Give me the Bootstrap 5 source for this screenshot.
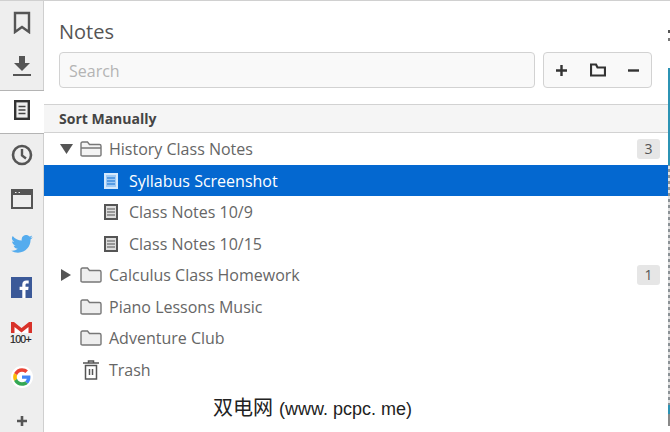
<!DOCTYPE html>
<html lang="en">
<head>
<meta charset="UTF-8">
<title>Notes</title>
<link rel="stylesheet" href="https://cdn.jsdelivr.net/npm/bootstrap@5.3.0/dist/css/bootstrap.min.css">
<style>
html, body { height: 432px; overflow: hidden; background: #fff; }
body { font-family: "Open Sans", sans-serif; color: #555; }
.app-shell { width: 670px; height: 432px; border-top: 1px solid #d0d0d0; position: relative; }
.side-rail { width: 44px; background: #eeeeee; flex: none; }
.rail-item { height: 44.3px; flex: none; border-right: 1px solid #cfcfcf; padding-bottom: 2px; }
.rail-item.is-active { background: #fff; border-top: 1px solid #b4b4b4; border-bottom: 1px solid #b4b4b4; border-right: 0; padding-bottom: 3px; }
.main-pane { flex: 1 1 0; min-width: 0; }
.edge-strip { width: 2px; flex: none; border-left: 0; background:
  linear-gradient(#fff 0 29px, #555 29px 32px, #fff 32px 37px, #777 37px 40px, #fff 40px 67px, #2c93b4 67px 164px, transparent 164px 194px, transparent 194px 404px, #2c93b4 404px 413px, #888 413px 425px, #fff 425px),
  repeating-linear-gradient(#8b9296 0 3px, #e2e2e2 3px 6px); }
.pane-title { font-size: 20px; line-height: 27px; color: #555; padding: 17px 0 0 15px; }
.search-row { padding: 7px 16px 0 15px; gap: 8px; height: 43px; }
.search-box { height: 36px; font-size: 16px; background: #f9f9f9; border: 1px solid #d2d2d2; border-radius: 4px; padding: 2px 9px 0; color: #555; }
.search-box::placeholder { color: #b4b4b4; }
.tool-group { width: 109px; height: 36px; flex: none; background: #f9f9f9; border: 1px solid #d2d2d2; border-radius: 4px; padding: 0 11px; }
.sort-bar { margin-top: 16px; height: 29px; background: #f5f5f5; border-top: 1px solid #d2d2d2; border-bottom: 1px solid #d2d2d2; font-size: 14px; font-weight: 700; color: #444; padding-left: 15px; line-height: 28px; }
.tree-row { height: 31.5px; font-size: 16px; color: #666; padding: 1px 8px 0 0; white-space: nowrap; }
.tree-row.is-selected { background: #0468d0; color: #fff; }
.tw { width: 16px; margin-left: 15px; flex: none; }
.folder-ic { width: 22px; margin-left: 5px; margin-right: 7px; flex: none; }
.note-ic { margin-left: 60px; margin-right: 11px; flex: none; }
.count-pill { width: 23px; height: 20px; background: #e6e6e6; border-radius: 3px; font-size: 14px; line-height: 20px; text-align: center; color: #555; }
.watermark { position: absolute; left: 213px; top: 395px; font-family: "Liberation Sans", "Noto Sans CJK SC", sans-serif; font-size: 18px; line-height: 24px; color: #222; white-space: nowrap; }
.watermark-cjk { font-size: 20px; margin-right: 6px; }
</style>
</head>
<body>
<div class="app-shell d-flex">
  <div class="side-rail d-flex flex-column overflow-hidden">
    <div class="rail-item d-flex align-items-center justify-content-center">
      <svg width="18" height="23" viewBox="0 0 18 23"><path d="M2 2h14v19l-7-5-7 5z" fill="none" stroke="#555" stroke-width="2.4"/></svg>
    </div>
    <div class="rail-item d-flex align-items-center justify-content-center">
      <svg width="20" height="22" viewBox="0 0 20 22"><path d="M7 1h6v7h5l-8 8-8-8h5z" fill="#555"/><rect x="1" y="19" width="18" height="2" fill="#555"/></svg>
    </div>
    <div class="rail-item is-active d-flex align-items-center justify-content-center">
      <svg width="16" height="20" viewBox="0 0 16 20"><rect x="1.200" y="1.200" width="13.600" height="17.600" fill="#eee" stroke="#333" stroke-width="2.400"/><path d="M4.500 6.500h7M4.500 10h7M4.500 13.500h7" stroke="#444" stroke-width="1.500"/></svg>
    </div>
    <div class="rail-item d-flex align-items-center justify-content-center">
      <svg width="22" height="22" viewBox="0 0 22 22"><circle cx="11" cy="11" r="9" fill="none" stroke="#555" stroke-width="2.600"/><path d="M11 5v6.500l4 3" fill="none" stroke="#555" stroke-width="2.400"/></svg>
    </div>
    <div class="rail-item d-flex align-items-center justify-content-center">
      <svg width="22" height="20" viewBox="0 0 22 20"><rect x="1" y="1" width="20" height="18" fill="none" stroke="#555" stroke-width="2"/><rect x="1" y="1" width="20" height="5" fill="#555"/><path d="M4 3.500h1.500M7.500 3.500h1.500" stroke="#eee" stroke-width="1.200"/></svg>
    </div>
    <div class="rail-item d-flex align-items-center justify-content-center">
      <svg width="22" height="18" viewBox="0 0 24 20"><path d="M24 2.400a10 10 0 0 1-2.800.8A5 5 0 0 0 23.300.5a10 10 0 0 1-3.100 1.200 4.900 4.900 0 0 0-8.400 4.500A14 14 0 0 1 1.700 1a4.900 4.900 0 0 0 1.500 6.600 5 5 0 0 1-2.200-.6c0 2.400 1.700 4.400 3.900 4.900a5 5 0 0 1-2.200.1 4.900 4.900 0 0 0 4.600 3.400A9.900 9.900 0 0 1 0 17.400 14 14 0 0 0 7.500 19.600c9.100 0 14.300-7.700 14-14.600A10 10 0 0 0 24 2.400z" fill="#55acee"/></svg>
    </div>
    <div class="rail-item d-flex align-items-center justify-content-center">
      <svg width="21" height="21" viewBox="0 0 21 21"><rect width="21" height="21" fill="#3b5998"/><path d="M14.500 21v-8h2.700l.4-3.200h-3.100V7.900c0-.9.300-1.500 1.600-1.500h1.600V3.500c-.3 0-1.300-.1-2.400-.1-2.400 0-4 1.400-4 4.100v2.300H8.600V13h2.700v8z" fill="#fff"/></svg>
    </div>
    <div class="rail-item d-flex align-items-center justify-content-center">
      <svg width="23" height="23" viewBox="0 0 23 23"><path d="M1 12V1h3l7.500 6L19 1h3v11z" fill="#fff"/><path d="M1 12V1h3l7.500 6L19 1h3v11h-3.500V6l-7 5.500-7-5.500v6z" fill="#d8322a"/><text x="0" y="21.500" font-family="Liberation Sans, sans-serif" font-size="10.500" letter-spacing="-.7" fill="#222" stroke="#222" stroke-width=".2">100+</text></svg>
    </div>
    <div class="rail-item d-flex align-items-center justify-content-center">
      <svg width="22" height="22" viewBox="-6 -6 60 60"><circle cx="24" cy="24" r="30" fill="#fff"/><path fill="#EA4335" d="M24 9.500c3.500 0 6.700 1.200 9.200 3.600l6.900-6.900C35.900 2.400 30.500 0 24 0 14.600 0 6.500 5.400 2.600 13.200l8 6.200C12.400 13.700 17.700 9.500 24 9.500z"/><path fill="#4285F4" d="M47 24.500c0-1.600-.1-3.100-.4-4.500H24v9h13c-.6 3-2.300 5.500-4.800 7.200l7.700 6C44.400 38 47 31.800 47 24.500z"/><path fill="#FBBC05" d="M10.500 28.600A14.500 14.500 0 0 1 10.500 19.400l-8-6.200a24 24 0 0 0 0 21.600z"/><path fill="#34A853" d="M24 48c6.500 0 11.900-2.100 15.900-5.800l-7.700-6c-2.200 1.400-4.900 2.300-8.200 2.300-6.300 0-11.600-4.200-13.500-9.900l-8 6.200C6.500 42.600 14.600 48 24 48z"/></svg>
    </div>
    <div class="rail-item d-flex align-items-center justify-content-center">
      <svg width="12" height="12" viewBox="0 0 12 12"><path d="M6 1v10M1 6h10" stroke="#555" stroke-width="2.600"/></svg>
    </div>
  </div>

  <div class="main-pane d-flex flex-column">
    <div class="pane-title">Notes</div>
    <div class="search-row d-flex">
      <input class="form-control search-box flex-grow-1" type="text" placeholder="Search">
      <div class="tool-group d-flex align-items-center justify-content-between">
        <svg width="13" height="13" viewBox="0 0 13 13"><path d="M6.500 1v11M1 6.500h11" stroke="#333" stroke-width="2.400"/></svg>
        <svg width="16" height="14" viewBox="0 0 16 14"><path d="M1 12.500V1.500h5l1.500 3H15v8z" fill="#f9f9f9" stroke="#333" stroke-width="2.200"/></svg>
        <svg width="13" height="13" viewBox="0 0 13 13"><path d="M1 6.500h11" stroke="#333" stroke-width="2.400"/></svg>
      </div>
    </div>
    <div class="sort-bar">Sort Manually</div>
    <div class="tree-list">
      <div class="tree-row d-flex align-items-center">
        <svg class="tw" width="16" height="12" viewBox="0 0 16 12"><path d="M1 1h13L7.500 11z" fill="#555"/></svg>
        <svg class="folder-ic" width="22" height="16" viewBox="0 0 22 16"><path d="M1 14V2.500Q1 1 2.500 1h5l2 2.500h10Q21 3.500 21 5v9q0 1-1.500 1h-17Q1 15 1 14zM1 7h20" fill="#f4f4f4" stroke="#777" stroke-width="1.400"/></svg>
        <span>History Class Notes</span>
        <span class="count-pill ms-auto">3</span>
      </div>
      <div class="tree-row is-selected d-flex align-items-center">
        <svg class="note-ic" width="14" height="16" viewBox="0 0 14 16"><rect x="1" y="1" width="12" height="14" fill="#9fcaf5" stroke="#d5e9fc" stroke-width="2"/><path d="M3 5h8M3 8h8M3 11h8" stroke="#0f6fd3" stroke-width="1.200"/></svg>
        <span>Syllabus Screenshot</span>
      </div>
      <div class="tree-row d-flex align-items-center">
        <svg class="note-ic" width="14" height="16" viewBox="0 0 14 16"><rect x="1" y="1" width="12" height="14" fill="#ddd" stroke="#555" stroke-width="2"/><path d="M3 5h8M3 8h8M3 11h8" stroke="#555" stroke-width="1.200"/></svg>
        <span>Class Notes 10/9</span>
      </div>
      <div class="tree-row d-flex align-items-center">
        <svg class="note-ic" width="14" height="16" viewBox="0 0 14 16"><rect x="1" y="1" width="12" height="14" fill="#ddd" stroke="#555" stroke-width="2"/><path d="M3 5h8M3 8h8M3 11h8" stroke="#555" stroke-width="1.200"/></svg>
        <span>Class Notes 10/15</span>
      </div>
      <div class="tree-row d-flex align-items-center">
        <svg class="tw" width="16" height="14" viewBox="0 0 16 14"><path d="M2 1l10 6-10 6z" fill="#555"/></svg>
        <svg class="folder-ic" width="22" height="16" viewBox="0 0 22 16"><path d="M1 14V2.500Q1 1 2.500 1h5l2 2.500h10Q21 3.500 21 5v9q0 1-1.500 1h-17Q1 15 1 14z" fill="#eee" stroke="#777" stroke-width="1.400"/></svg>
        <span>Calculus Class Homework</span>
        <span class="count-pill ms-auto">1</span>
      </div>
      <div class="tree-row d-flex align-items-center">
        <span class="tw"></span>
        <svg class="folder-ic" width="22" height="16" viewBox="0 0 22 16"><path d="M1 14V2.500Q1 1 2.500 1h5l2 2.500h10Q21 3.500 21 5v9q0 1-1.500 1h-17Q1 15 1 14z" fill="#eee" stroke="#777" stroke-width="1.400"/></svg>
        <span>Piano Lessons Music</span>
      </div>
      <div class="tree-row d-flex align-items-center">
        <span class="tw"></span>
        <svg class="folder-ic" width="22" height="16" viewBox="0 0 22 16"><path d="M1 14V2.500Q1 1 2.500 1h5l2 2.500h10Q21 3.500 21 5v9q0 1-1.500 1h-17Q1 15 1 14z" fill="#eee" stroke="#777" stroke-width="1.400"/></svg>
        <span>Adventure Club</span>
      </div>
      <div class="tree-row d-flex align-items-center">
        <span class="tw"></span>
        <svg class="folder-ic" width="22" height="20" viewBox="0 0 22 20"><path d="M3 3h16M8.500 3V1h5v2" fill="none" stroke="#555" stroke-width="1.500"/><path d="M5.500 5.500h11V19h-11z" fill="none" stroke="#555" stroke-width="1.500"/><path d="M9.500 9v6M12.500 9v6" stroke="#555" stroke-width="1.500"/></svg>
        <span>Trash</span>
      </div>
    </div>
  </div>
  <div class="edge-strip"></div>
  <div class="watermark"><span class="watermark-cjk">双电网</span>(www. pcpc. me)</div>
</div>
<script src="https://cdn.jsdelivr.net/npm/bootstrap@5.3.0/dist/js/bootstrap.bundle.min.js"></script>
</body>
</html>
